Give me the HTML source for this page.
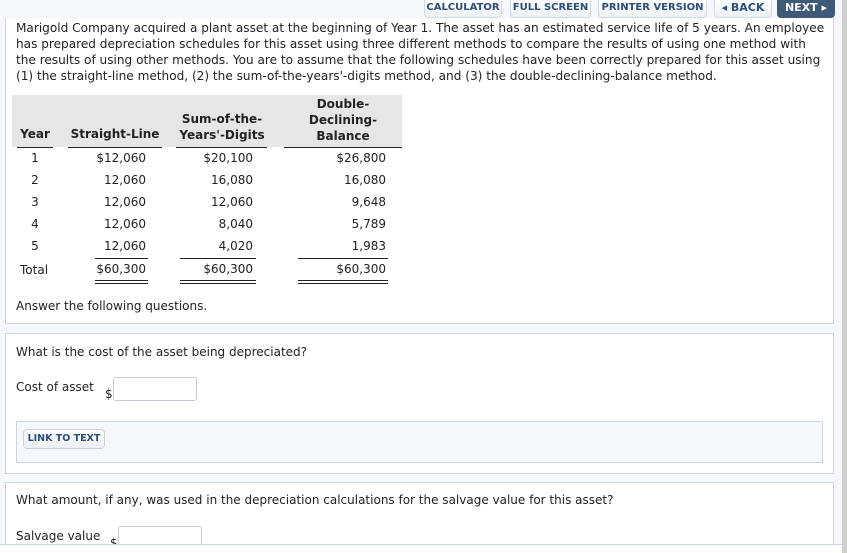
<!DOCTYPE html>
<html style="overflow:hidden"><head><style>
html,body{overflow:hidden}
body{margin:0;width:847px;height:553px;background:#f4f8fc;font-family:"DejaVu Sans",Verdana,sans-serif;font-size:12px;color:#222;position:relative}
.a{position:absolute;white-space:nowrap}
.btn{position:absolute;top:0;height:17px;border:1px solid #d4d9e0;border-top:none;border-radius:0 0 4px 4px;background:linear-gradient(#fff,#eef1f5);color:#2b4e7c;font-weight:bold;font-size:10px;line-height:16px;text-align:center}
.panel{position:absolute;left:5px;width:827px;background:#fff;border:1px solid #cdd5e0}
.r{text-align:right}
.hl{position:absolute;height:0;border-top:1px solid #222}
.dl{position:absolute;height:2px;border-top:1px solid #222;border-bottom:1px solid #222}
.inp{position:absolute;border:1px solid #c8ccd2;border-radius:3px;background:#fff}
</style></head><body>
<div class="btn" style="left:424px;width:76px">CALCULATOR</div>
<div class="btn" style="left:510px;width:79px">FULL SCREEN</div>
<div class="btn" style="left:598px;width:107px">PRINTER VERSION</div>
<div class="btn" style="left:714px;width:56px;font-size:11px">◂ BACK</div>
<div class="btn" style="left:777px;width:56px;background:#3e5a78;color:#fff;border-color:#3e5a78;font-size:11px">NEXT ▸</div>
<div style="position:absolute;right:0;top:0;width:5px;height:553px;background:#cfcfcf"></div>

<div class="panel" style="top:18px;height:305px;border-top:none"></div>
<div class="a" style="left:16px;top:20px;line-height:16px;font-size:12.1px">Marigold Company acquired a plant asset at the beginning of Year 1. The asset has an estimated service life of 5 years. An employee<br>has prepared depreciation schedules for this asset using three different methods to compare the results of using one method with<br>the results of using other methods. You are to assume that the following schedules have been correctly prepared for this asset using<br>(1) the straight-line method, (2) the sum-of-the-years'-digits method, and (3) the double-declining-balance method.</div>

<div style="position:absolute;left:12px;top:95px;width:390px;height:52px;background:#e6e6e6"></div>
<div class="a" style="left:17px;top:127px;width:36px;text-align:center;font-weight:bold">Year</div>
<div class="a" style="left:68px;top:127px;width:94px;text-align:center;font-weight:bold">Straight-Line</div>
<div class="a" style="left:170px;top:111px;width:104px;text-align:center;font-weight:bold;line-height:16px">Sum-of-the-<br>Years'-Digits</div>
<div class="a" style="left:284px;top:96px;width:118px;text-align:center;font-weight:bold;line-height:16px">Double-<br>Declining-<br>Balance</div>
<div class="hl" style="left:17px;width:36px;top:147px"></div>
<div class="hl" style="left:68px;width:94px;top:147px"></div>
<div class="hl" style="left:176px;width:91px;top:147px"></div>
<div class="hl" style="left:284px;width:118px;top:147px"></div>

<div class="a" style="left:17px;top:147px;width:36px;text-align:center;line-height:22px">1<br>2<br>3<br>4<br>5</div>
<div class="a r" style="left:60px;top:147px;width:86px;line-height:22px">$12,060<br>12,060<br>12,060<br>12,060<br>12,060</div>
<div class="a r" style="left:170px;top:147px;width:83px;line-height:22px">$20,100<br>16,080<br>12,060<br>8,040<br>4,020</div>
<div class="a r" style="left:290px;top:147px;width:96px;line-height:22px">$26,800<br>16,080<br>9,648<br>5,789<br>1,983</div>
<div class="hl" style="left:95px;width:53px;top:258px"></div>
<div class="hl" style="left:180px;width:76px;top:258px"></div>
<div class="hl" style="left:298px;width:90px;top:258px"></div>
<div class="a" style="left:20px;top:263px">Total</div>
<div class="a r" style="left:60px;top:262px;width:86px">$60,300</div>
<div class="a r" style="left:170px;top:262px;width:83px">$60,300</div>
<div class="a r" style="left:290px;top:262px;width:96px">$60,300</div>
<div class="dl" style="left:95px;width:53px;top:280px"></div>
<div class="dl" style="left:180px;width:76px;top:280px"></div>
<div class="dl" style="left:298px;width:90px;top:280px"></div>
<div class="a" style="left:16px;top:299px">Answer the following questions.</div>

<div class="panel" style="top:333px;height:139px"></div>
<div class="a" style="left:16px;top:345px">What is the cost of the asset being depreciated?</div>
<div class="a" style="left:16px;top:380px">Cost of asset</div>
<div class="a" style="left:105px;top:387px">$</div>
<div class="inp" style="left:113px;top:377px;width:82px;height:22px"></div>
<div style="position:absolute;left:16px;top:421px;width:805px;height:40px;background:#f4f8fc;border:1px solid #cdd5e0"></div>
<div class="a" style="left:23px;top:429px;width:80px;height:18px;border:1px solid #cdd2d8;border-radius:4px;background:linear-gradient(#fff,#eceff3);color:#2b4e7c;font-weight:bold;font-size:9.5px;line-height:18px;text-align:center">LINK TO TEXT</div>

<div class="panel" style="top:482px;height:62px;border-bottom:none"></div>
<div class="a" style="left:16px;top:493px">What amount, if any, was used in the depreciation calculations for the salvage value for this asset?</div>
<div class="a" style="left:16px;top:529px">Salvage value</div>
<div class="a" style="left:110px;top:536px;height:8px;overflow:hidden">$</div>
<div class="inp" style="left:118px;top:526px;width:82px;height:18px;border-bottom:none;border-radius:3px 3px 0 0"></div>
<div style="position:absolute;left:0;top:544px;width:842px;height:9px;background:#fff;border-top:1px solid #cdd5e0"></div>
</body></html>
